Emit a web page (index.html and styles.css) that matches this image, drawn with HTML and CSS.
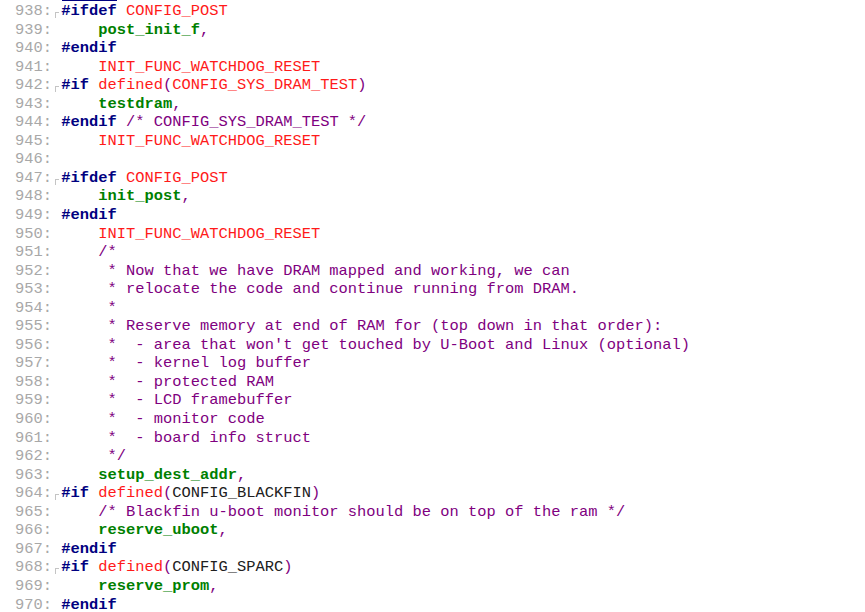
FILE: index.html
```html
<!DOCTYPE html>
<html>
<head>
<meta charset="utf-8">
<link rel="stylesheet" href="styles.css">
</head>
<body>
<div class="code">
<div class="cursor"></div>
<div class="ln"><span class="num">938:<i class="fold"></i></span><span class="pp">#ifdef</span> <span class="mac">CONFIG_POST</span></div>
<div class="ln"><span class="num">939: </span>    <span class="id">post_init_f</span><span class="pu">,</span></div>
<div class="ln"><span class="num">940: </span><span class="pp">#endif</span></div>
<div class="ln"><span class="num">941: </span>    <span class="mac">INIT_FUNC_WATCHDOG_RESET</span></div>
<div class="ln"><span class="num">942:<i class="fold"></i></span><span class="pp">#if</span> <span class="mac">defined</span><span class="pu">(</span><span class="mac">CONFIG_SYS_DRAM_TEST</span><span class="pu">)</span></div>
<div class="ln"><span class="num">943: </span>    <span class="id">testdram</span><span class="pu">,</span></div>
<div class="ln"><span class="num">944: </span><span class="pp">#endif</span> <span class="cm">/* CONFIG_SYS_DRAM_TEST */</span></div>
<div class="ln"><span class="num">945: </span>    <span class="mac">INIT_FUNC_WATCHDOG_RESET</span></div>
<div class="ln"><span class="num">946: </span></div>
<div class="ln"><span class="num">947:<i class="fold"></i></span><span class="pp">#ifdef</span> <span class="mac">CONFIG_POST</span></div>
<div class="ln"><span class="num">948: </span>    <span class="id">init_post</span><span class="pu">,</span></div>
<div class="ln"><span class="num">949: </span><span class="pp">#endif</span></div>
<div class="ln"><span class="num">950: </span>    <span class="mac">INIT_FUNC_WATCHDOG_RESET</span></div>
<div class="ln"><span class="num">951: </span>    <span class="cm">/*</span></div>
<div class="ln"><span class="num">952: </span>     <span class="cm">* Now that we have DRAM mapped and working, we can</span></div>
<div class="ln"><span class="num">953: </span>     <span class="cm">* relocate the code and continue running from DRAM.</span></div>
<div class="ln"><span class="num">954: </span>     <span class="cm">*</span></div>
<div class="ln"><span class="num">955: </span>     <span class="cm">* Reserve memory at end of RAM for (top down in that order):</span></div>
<div class="ln"><span class="num">956: </span>     <span class="cm">*  - area that won't get touched by U-Boot and Linux (optional)</span></div>
<div class="ln"><span class="num">957: </span>     <span class="cm">*  - kernel log buffer</span></div>
<div class="ln"><span class="num">958: </span>     <span class="cm">*  - protected RAM</span></div>
<div class="ln"><span class="num">959: </span>     <span class="cm">*  - LCD framebuffer</span></div>
<div class="ln"><span class="num">960: </span>     <span class="cm">*  - monitor code</span></div>
<div class="ln"><span class="num">961: </span>     <span class="cm">*  - board info struct</span></div>
<div class="ln"><span class="num">962: </span>     <span class="cm">*/</span></div>
<div class="ln"><span class="num">963: </span>    <span class="id">setup_dest_addr</span><span class="pu">,</span></div>
<div class="ln"><span class="num">964:<i class="fold"></i></span><span class="pp">#if</span> <span class="mac">defined</span><span class="pu">(</span><span class="txt">CONFIG_BLACKFIN</span><span class="pu">)</span></div>
<div class="ln"><span class="num">965: </span>    <span class="cm">/* Blackfin u-boot monitor should be on top of the ram */</span></div>
<div class="ln"><span class="num">966: </span>    <span class="id">reserve_uboot</span><span class="pu">,</span></div>
<div class="ln"><span class="num">967: </span><span class="pp">#endif</span></div>
<div class="ln"><span class="num">968:<i class="fold"></i></span><span class="pp">#if</span> <span class="mac">defined</span><span class="pu">(</span><span class="txt">CONFIG_SPARC</span><span class="pu">)</span></div>
<div class="ln"><span class="num">969: </span>    <span class="id">reserve_prom</span><span class="pu">,</span></div>
<div class="ln"><span class="num">970: </span><span class="pp">#endif</span></div>
</div>
</body>
</html>
```
FILE: styles.css
```css
html, body {
  margin: 0;
  padding: 0;
  background: #ffffff;
}
.code {
  padding-left: 15px;
  font-family: "Liberation Mono", "DejaVu Sans Mono", monospace;
  font-size: 15.414px;
  color: #202020;
}
.cursor {
  height: 1px;
  width: 55px;
  margin-left: 47px;
  margin-bottom: 1px;
  background: #000080;
}
.ln {
  height: 18.55px;
  line-height: 18.55px;
  white-space: pre;
}
.num {
  display: inline-block;
  width: 46.25px;
  color: #a8a8a8;
}
.fold {
  display: inline-block;
  width: 3px;
  height: 5px;
  margin-left: 3px;
  border-left: 1px solid #c4c4c4;
  border-top: 1px solid #c4c4c4;
  vertical-align: -3px;
}
.pp {
  color: #000080;
  font-weight: bold;
}
.mac {
  color: #ff1a1a;
}
.id {
  color: #008000;
  font-weight: bold;
}
.pu {
  color: #800080;
}
.cm {
  color: #800080;
}
.txt {
  color: #202020;
}
```
